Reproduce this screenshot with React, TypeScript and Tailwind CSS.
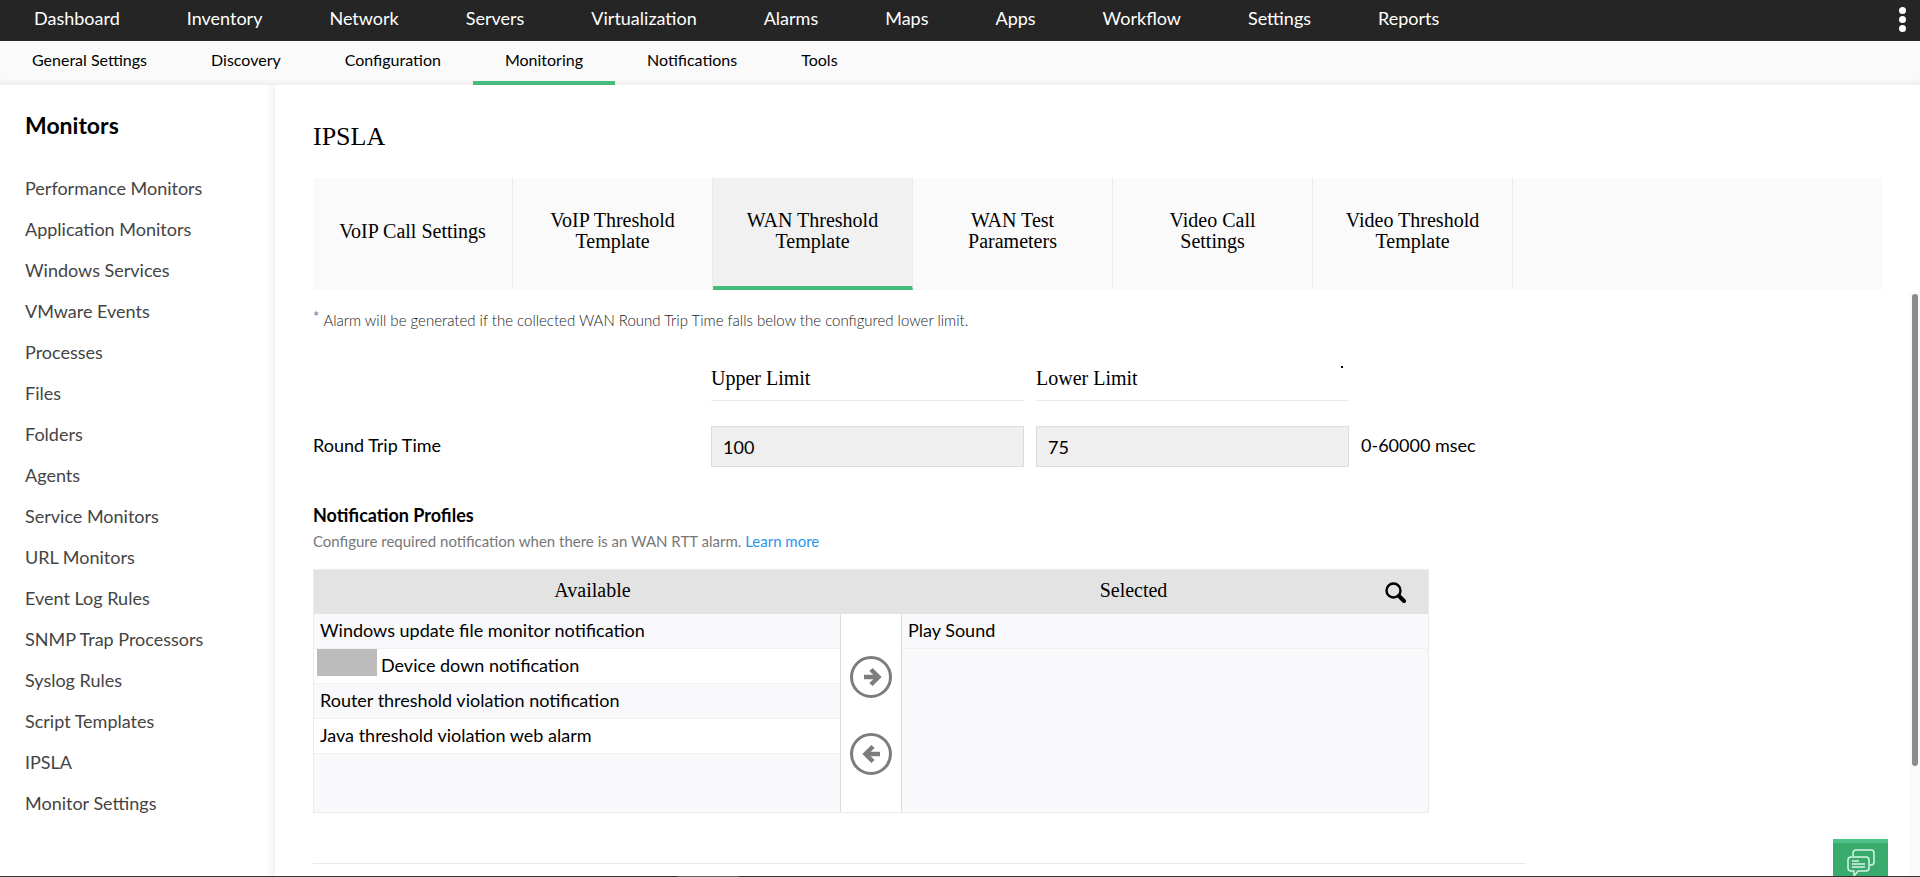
import { useState } from 'react';

const mainNav = [
  'Dashboard',
  'Inventory',
  'Network',
  'Servers',
  'Virtualization',
  'Alarms',
  'Maps',
  'Apps',
  'Workflow',
  'Settings',
  'Reports',
];

const subNav = ['General Settings', 'Discovery', 'Configuration', 'Monitoring', 'Notifications', 'Tools'];

const monitors = [
  'Performance Monitors',
  'Application Monitors',
  'Windows Services',
  'VMware Events',
  'Processes',
  'Files',
  'Folders',
  'Agents',
  'Service Monitors',
  'URL Monitors',
  'Event Log Rules',
  'SNMP Trap Processors',
  'Syslog Rules',
  'Script Templates',
  'IPSLA',
  'Monitor Settings',
];

const tabs = [
  'VoIP Call Settings',
  'VoIP Threshold Template',
  'WAN Threshold Template',
  'WAN Test Parameters',
  'Video Call Settings',
  'Video Threshold Template',
];

const available = [
  { id: 1, name: 'Windows update file monitor notification' },
  { id: 2, name: 'Device down notification', masked: true },
  { id: 3, name: 'Router threshold violation notification' },
  { id: 4, name: 'Java threshold violation web alarm' },
];

const selected = [{ id: 5, name: 'Play Sound' }];

type Profile = { id: number; name: string; masked?: boolean };

function ProfileList({ items }: { items: Profile[] }) {
  return (
    <ul className="flex-1 bg-[#f9f9fb]">
      {items.map((item, index) => (
        <li
          key={item.id}
          className={`flex h-[35px] items-center border-b border-[#f1f1f1] px-[6px] pb-[2px] ${
            index % 2 === 0 ? 'bg-[#f9f9fb]' : 'bg-white'
          }`}
        >
          {item.masked && <span className="-ml-[3px] mr-1 h-[27px] w-[60px] self-start bg-[#bcbcbc]" />}
          {item.name}
        </li>
      ))}
    </ul>
  );
}

function SearchIcon() {
  return (
    <svg className="size-[21px]" viewBox="0 0 21 21" fill="none" stroke="black">
      <circle cx="8.5" cy="8.5" r="7" strokeWidth="2.4" />
      <path d="M14 14l5 5" strokeWidth="4" strokeLinecap="round" />
    </svg>
  );
}

function ArrowRight() {
  return (
    <svg className="size-9 shrink-0" viewBox="0 0 36 36" fill="none" stroke="currentColor" strokeWidth="4.5">
      <path d="M11 18h14" />
      <path d="M18 10.5l7.5 7.5-7.5 7.5" />
    </svg>
  );
}

function ArrowLeft() {
  return (
    <svg className="size-9 shrink-0" viewBox="0 0 36 36" fill="none" stroke="currentColor" strokeWidth="4.5">
      <path d="M27 18H13" />
      <path d="M20 10.5L12.5 18l7.5 7.5" />
    </svg>
  );
}

function ChatIcon() {
  return (
    <svg className="h-[27px] w-7" viewBox="0 0 28 27" fill="none" stroke="#d9f5e6" strokeWidth="1.5" strokeLinejoin="round">
      <path d="M6 7V4a3 3 0 0 1 3-3h15a3 3 0 0 1 3 3v9a3 3 0 0 1-3 3h-1" />
      <path d="M4 8h15a3 3 0 0 1 3 3v8a3 3 0 0 1-3 3h-8l-4 5v-5H4a3 3 0 0 1-3-3v-8a3 3 0 0 1 3-3z" />
      <path d="M5 12h7M5 15h13M5 18h13" />
    </svg>
  );
}

export default function App() {
  const [upper, setUpper] = useState('100');
  const [lower, setLower] = useState('75');

  return (
    <div className="relative flex h-screen flex-col overflow-hidden bg-white font-[Lato,sans-serif] text-lg/6 text-black">
      <header className="shrink-0">
        <nav className="flex h-[41px] items-center gap-[67px] bg-[#252525] pb-[2px] pl-[34px] pr-[14px] text-white">
          {mainNav.map((item) => (
            <a key={item} href="#" className="pb-1">
              {item}
            </a>
          ))}
          <button aria-label="More" className="ml-auto flex flex-col gap-[2px]">
            <span className="size-[7px] rounded-full bg-white" />
            <span className="size-[7px] rounded-full bg-white" />
            <span className="size-[7px] rounded-full bg-white" />
          </button>
        </nav>
        <nav className="flex h-11 bg-[#fafafa] text-base shadow-[inset_0_-6px_6px_-4px_#ebebeb]">
          {subNav.map((item) => (
            <a
              key={item}
              href="#"
              className={`flex items-center border-b-4 px-8 pb-[2px] ${
                item === 'Monitoring' ? 'border-[#45bb7c]' : 'border-transparent'
              }`}
            >
              {item}
            </a>
          ))}
        </nav>
      </header>

      <div className="flex min-h-0 flex-1">
        <aside className="w-[275px] shrink-0 pl-[25px] shadow-[inset_-8px_0_8px_-6px_#ececec]">
          <h2 className="pt-[26px] text-[23px]/7 font-bold">Monitors</h2>
          <ul className="mt-7 text-[#444]">
            {monitors.map((item) => (
              <li key={item} className="flex h-[41px] items-center">
                <a href="#">{item}</a>
              </li>
            ))}
          </ul>
        </aside>

        <main className="min-w-0 flex-1 pl-[38px] pr-[37px]">
          <h1 className="pt-9 font-['Liberation_Serif',serif] text-[26px]/8">IPSLA</h1>

          <div className="mt-[25px] flex h-28 bg-[#fafafa] font-['Liberation_Serif',serif] text-xl/[21px]">
            {tabs.map((tab) => (
              <button
                key={tab}
                className={`w-[200px] border-r border-b-4 border-r-[#ebebeb] px-6 pb-[2px] text-center ${
                  tab === 'WAN Threshold Template' ? 'border-b-[#45bb7c] bg-[#f1f1f1]' : 'border-b-transparent'
                }`}
              >
                {tab}
              </button>
            ))}
          </div>

          <p className="mt-[18px] flex gap-1 text-[15px]/6 font-light text-[#222]">
            <span className="-mt-1 font-normal text-[#777]">*</span>
            Alarm will be generated if the collected WAN Round Trip Time falls below the configured lower limit.
          </p>

          <div className="mt-[34px] grid grid-cols-[386px_313px_313px_1fr] items-center gap-x-3">
            <span />
            <label htmlFor="upper" className="border-b border-[#ebebeb] pb-[10px] font-['Liberation_Serif',serif] text-xl/6">
              Upper Limit
            </label>
            <label htmlFor="lower" className="relative border-b border-[#ebebeb] pb-[10px] font-['Liberation_Serif',serif] text-xl/6">
              Lower Limit
              <span className="absolute right-[6px] top-0 size-[2px] bg-black" />
            </label>
            <span />
            <span className="mt-[21px]">Round Trip Time</span>
            <input
              id="upper"
              aria-label="Round Trip Time upper limit"
              value={upper}
              onChange={(e) => setUpper(e.target.value)}
              className="mt-[25px] h-[41px] border border-[#dcdcdc] bg-[#efefef] px-[11px]"
            />
            <input
              id="lower"
              aria-label="Round Trip Time lower limit"
              value={lower}
              onChange={(e) => setLower(e.target.value)}
              className="mt-[25px] h-[41px] border border-[#dcdcdc] bg-[#efefef] px-[11px]"
            />
            <span className="mt-[21px]">0-60000 msec</span>
          </div>

          <h3 className="mt-9 font-bold">Notification Profiles</h3>
          <p className="mt-[3px] text-[15px]/[22px] text-[#777]">
            Configure required notification when there is an WAN RTT alarm.{' '}
            <a href="#" className="text-[#2a95e9]">
              Learn more
            </a>
          </p>

          <div className="mt-[17px] w-[1116px] border border-[#ebebeb]">
            <div className="flex h-11 bg-[#e3e3e3] font-['Liberation_Serif',serif] text-xl/10">
              <span className="w-1/2 text-center">Available</span>
              <span className="w-1/2 pr-8 text-center">Selected</span>
              <button aria-label="Search" className="-ml-[66px] flex w-[66px] items-center justify-center">
                <SearchIcon />
              </button>
            </div>
            <div className="flex h-[198px]">
              <ProfileList items={available} />
              <div className="flex w-[62px] flex-col items-center justify-center gap-[35px] border-x border-[#dcdcdc] pt-1 text-[#7d7d7d]">
                <button aria-label="Add" className="flex size-[42px] items-center justify-center rounded-full border-3 border-[#7d7d7d]">
                  <ArrowRight />
                </button>
                <button aria-label="Remove" className="flex size-[42px] items-center justify-center rounded-full border-3 border-[#7d7d7d]">
                  <ArrowLeft />
                </button>
              </div>
              <ProfileList items={selected} />
            </div>
          </div>

          <hr className="mt-[50px] w-[1213px] border-[#ebebeb]" />
        </main>
      </div>

      {/* page scrollbar */}
      <div className="absolute bottom-0 right-0 top-[291px] w-[11px] bg-[#fafafa]">
        <div className="ml-[3px] mt-[3px] h-[472px] w-[6px] rounded-full bg-[#8b8b8b]" />
      </div>

      <button
        aria-label="Chat"
        className="absolute bottom-0 right-8 flex h-[38px] w-[55px] justify-center border-t-4 border-[#4dc389] bg-[#38ab6d] pt-[6px]"
      >
        <ChatIcon />
      </button>
      <div className="absolute inset-x-0 bottom-0 h-px bg-[#333]">
        <div className="ml-[678px] h-px w-[61px] bg-[#666]" />
      </div>
    </div>
  );
}
